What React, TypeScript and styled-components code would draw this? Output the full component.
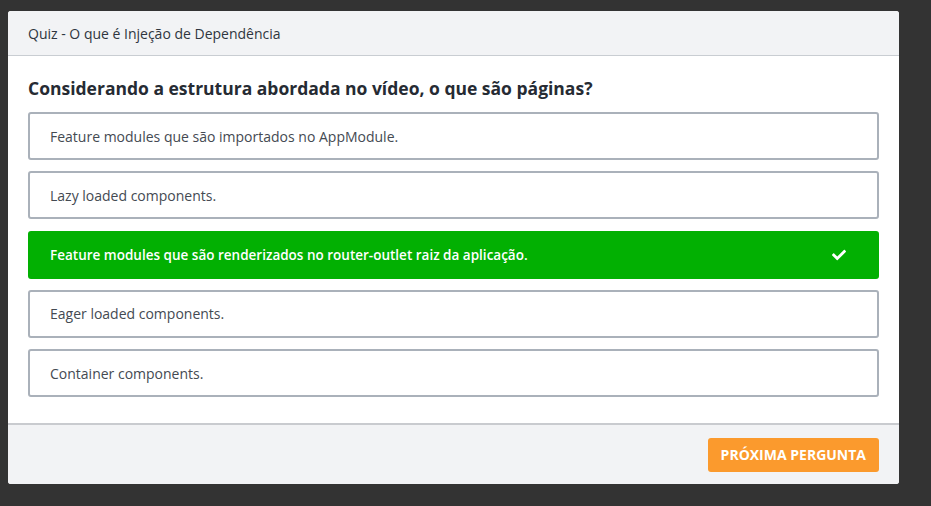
import React, { useState } from "react";
import styled, { createGlobalStyle } from "styled-components";
import { FaCheck } from "react-icons/fa";

const GlobalStyle = createGlobalStyle`
  html, body {
    margin: 0;
    padding: 0;
    background: #333333;
    font-family: "Open Sans", "Noto Sans", sans-serif;
  }
`;

const options = [
  "Feature modules que são importados no AppModule.",
  "Lazy loaded components.",
  "Feature modules que são renderizados no router-outlet raiz da aplicação.",
  "Eager loaded components.",
  "Container components.",
];

const App: React.FC = () => {
  const [selected, setSelected] = useState(2);

  return (
    <>
      <GlobalStyle />
      <Page>
        <Modal>
          <Header>Quiz - O que é Injeção de Dependência</Header>
          <Body>
            <Question>
              Considerando a estrutura abordada no vídeo, o que são páginas?
            </Question>
            <OptionList>
              {options.map((text, i) => (
                <Option
                  key={text}
                  $correct={i === selected}
                  onClick={() => setSelected(i)}
                >
                  <span>{text}</span>
                  {i === selected && <FaCheck size={14} />}
                </Option>
              ))}
            </OptionList>
          </Body>
          <Footer>
            <NextButton>Próxima pergunta</NextButton>
          </Footer>
        </Modal>
      </Page>
    </>
  );
};

export default App;

const Page = styled.div`
  width: 931px;
  height: 506px;
  padding: 11px 0 0 8px;
  box-sizing: border-box;
`;

const Modal = styled.div`
  width: 891px;
  background: #ffffff;
  border-radius: 3px;
  overflow: hidden;
`;

const Header = styled.div`
  height: 44px;
  display: flex;
  align-items: center;
  padding: 0 20px;
  background: #f2f3f5;
  border-bottom: 1px solid #c9cdd2;
  font-size: 14px;
  color: #2f3640;
`;

const Body = styled.div`
  padding: 20px 20px 26px;
`;

const Question = styled.h2`
  margin: 0 0 12px;
  font-size: 17.5px;
  line-height: 24px;
  font-weight: 700;
  color: #262b33;
`;

const OptionList = styled.div`
  display: flex;
  flex-direction: column;
  gap: 11.25px;
`;

const Option = styled.div<{ $correct: boolean }>`
  height: 48px;
  box-sizing: border-box;
  display: flex;
  align-items: center;
  justify-content: space-between;
  padding: 0 31px 0 20px;
  border-radius: 3px;
  border: 2px solid ${(p) => (p.$correct ? "#02b002" : "#aab1ba")};
  background: ${(p) => (p.$correct ? "#02b002" : "#ffffff")};
  color: ${(p) => (p.$correct ? "#ffffff" : "#444a52")};
  font-size: ${(p) => (p.$correct ? "13.5px" : "14px")};
  font-weight: ${(p) => (p.$correct ? 600 : 400)};
  cursor: pointer;
`;

const Footer = styled.div`
  height: 59px;
  display: flex;
  align-items: center;
  justify-content: flex-end;
  padding: 0 20px;
  background: #f2f3f5;
  border-top: 2px solid #c9cbcf;
`;

const NextButton = styled.button`
  height: 34px;
  padding: 0 13px;
  border: none;
  border-radius: 3px;
  background: #fb9a2d;
  color: #ffffff;
  font-family: "Open Sans", "Noto Sans", sans-serif;
  font-size: 14px;
  font-weight: 700;
  text-transform: uppercase;
  cursor: pointer;
`;
